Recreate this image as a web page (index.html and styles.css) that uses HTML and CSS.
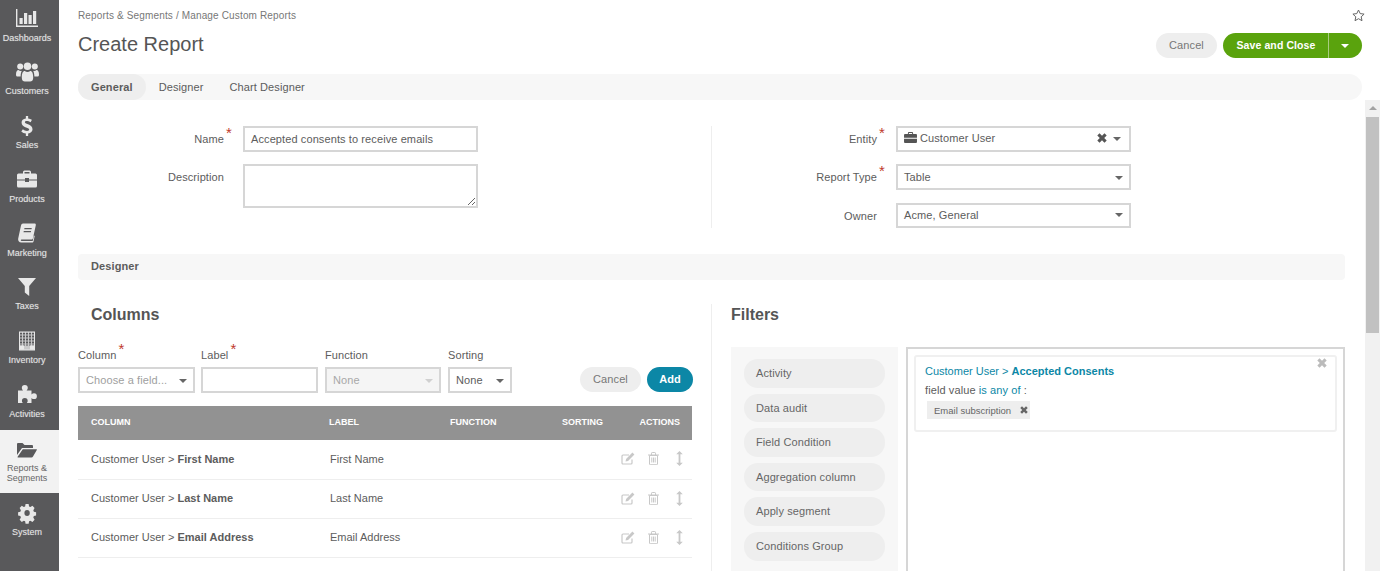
FILE: index.html
```html
<!DOCTYPE html>
<html>
<head>
	<title>Create Report</title>
	<link rel="stylesheet" href="styles.css">
</head>
<body>
	<svg class="icon-defs" width="0" height="0">
		<defs>
			<symbol id="i-edit" viewBox="0 0 14 13">
				<path d="M11 7.5V11a1 1 0 0 1-1 1H2a1 1 0 0 1-1-1V4a1 1 0 0 1 1-1h6" fill="none" stroke="currentColor" stroke-width="1.2"/>
				<path d="M4.5 9.5l.6-2.6L11.4.6l2 2-6.3 6.3z" fill="currentColor"/>
			</symbol>
			<symbol id="i-trash" viewBox="0 0 11 13">
				<path d="M1.5 3.5h8V12a.7.7 0 0 1-.7.7H2.2a.7.7 0 0 1-.7-.7zM0 3h11M3.5 3V1.2q0-.7.7-.7h2.6q.7 0 .7.7V3M3.800 5.500v5M5.500 5.500v5M7.200 5.500v5" fill="none" stroke="currentColor"/>
			</symbol>
			<symbol id="i-move" viewBox="0 0 7 15">
				<path d="M3.500 0L6.800 3.200H4.400v8.600h2.400L3.500 15 .2 11.800h2.400V3.200H.2z" fill="currentColor"/>
			</symbol>
			<symbol id="i-times" viewBox="0 0 10 10">
				<path d="M2.500.3L5 2.800 7.500.3 9.700 2.500 7.200 5l2.500 2.500-2.200 2.200L5 7.200 2.500 9.700.3 7.500 2.800 5 .3 2.500z" fill="currentColor"/>
			</symbol>
			<pattern id="windows" width="3" height="3" patternUnits="userSpaceOnUse">
				<rect x="1" y="1" width="2" height="2" fill="#59595b"/>
			</pattern>
		</defs>
	</svg>

	<nav class="sidebar">
		<a class="nav-item">
			<svg class="nav-icon" width="22" height="18" viewBox="0 0 22 18"><path d="M0 0h1.400v16.400H22V18H0zM3.500 9h3.200v6H3.500zM8 4h3.200v11H8zM12.500 6h3.200v9h-3.200zM17 2h3.200v13H17z"/></svg>
			<span>Dashboards</span>
		</a>
		<a class="nav-item">
			<svg class="nav-icon" width="23" height="19" viewBox="0 0 23 19"><circle cx="4.200" cy="4" r="3"/><circle cx="18.800" cy="4" r="3"/><circle cx="11.500" cy="3.800" r="3.800"/><path d="M0 12c0-3 1-4.500 2.500-4.500 1 1 2.500 1.200 3.500.7-.8 1-1.300 2.500-1.400 5.800H1.500C.5 14 0 13.500 0 12zM23 12c0-3-1-4.500-2.500-4.500-1 1-2.500 1.200-3.500.7.8 1 1.300 2.500 1.400 5.800h3.100c1 0 1.500-.5 1.500-2zM5.800 15c0-4.500 1.200-6.500 3-6.500 1.500 1.300 3.900 1.300 5.400 0 1.800 0 3 2 3 6.500 0 3-1.500 4-3 4H8.800c-1.500 0-3-1-3-4z"/></svg>
			<span>Customers</span>
		</a>
		<a class="nav-item">
			<svg class="nav-icon" width="12" height="21" viewBox="0 0 12 21"><path d="M4.800 0h2.400v2.500c1.500.2 3 .8 4 1.500L9.800 6.500C8.500 5.600 7 5.200 5.800 5.200c-1.300 0-2 .5-2 1.300 0 2.300 8 1.700 8 7.500 0 2.500-1.800 4-4.600 4.400V21H4.800v-2.500c-1.800-.2-3.500-1-4.800-2.200l1.700-2.400c1.300 1.200 2.800 1.800 4.300 1.800 1.500 0 2.300-.6 2.300-1.500C8.300 11.700.3 12.300.3 6.700.3 4.300 2 2.900 4.800 2.500z"/></svg>
			<span>Sales</span>
		</a>
		<a class="nav-item">
			<svg class="nav-icon" width="20" height="17" viewBox="0 0 20 17"><path d="M6 3V1.500Q6 0 7.500 0h5Q14 0 14 1.500V3h4.500Q20 3 20 4.500V9h-8V7.500H8V9H0V4.500Q0 3 1.500 3zM7.500 1.500V3h5V1.500zM0 10h8v1.500h4V10h8v5.500q0 1.500-1.500 1.500h-17Q0 17 0 15.500z"/></svg>
			<span>Products</span>
		</a>
		<a class="nav-item">
			<svg class="nav-icon" width="18" height="19" viewBox="0 0 18 19"><path d="M5 0h11.500c1 0 1.500.7 1.300 1.700L15 14.500c-.2 1-.8 1.500-1.800 1.500H3.500c-1 0-1 1.500.2 1.500h11l1.200-5.500.8.500L15.500 18c-.2.7-.5 1-1.200 1H3.500C1 19-.3 17.200.2 15L3 2C3.300.7 4 0 5 0zM6.500 4.500l-.3 1.200h7.300l.3-1.200zM5.800 7.500l-.3 1.200h7.300l.3-1.200z" fill-rule="evenodd"/></svg>
			<span>Marketing</span>
		</a>
		<a class="nav-item">
			<svg class="nav-icon" width="18" height="18" viewBox="0 0 18 18"><path d="M0 0h18l-6.800 8v10l-4.400-3.500V8z"/></svg>
			<span>Taxes</span>
		</a>
		<a class="nav-item">
			<svg class="nav-icon" width="16" height="19" viewBox="0 0 16 19"><path d="M0 0h16v19H0z"/><path d="M1 1h14v17H1z" fill="#c9c9ca"/><path d="M1 1h14v13H1z" fill="url(#windows)"/><path d="M1 14h4v4H1zM11 14h4v4h-4z"/></svg>
			<span>Inventory</span>
		</a>
		<a class="nav-item">
			<svg class="nav-icon" width="19" height="18" viewBox="0 0 19 18"><path d="M0 5.500h5c-.8-.8-1.200-1.500-1.200-2.500a3 3 0 0 1 6 0c0 1-.4 1.700-1.200 2.500h4.900v4c.8-.8 1.500-1.200 2.500-1.200a2.900 2.900 0 0 1 0 5.800c-1 0-1.700-.4-2.500-1.200V18H8.800c.6-.7.900-1.300.9-2.100a2.900 2.900 0 0 0-5.800 0c0 .8.300 1.400.9 2.100H0z"/></svg>
			<span>Activities</span>
		</a>
		<a class="nav-item nav-item-active">
			<svg class="nav-icon" width="20" height="15" viewBox="0 0 20 15"><path d="M0 1.500Q0 .5 1 .5h4.500L7.500 2.500H15q1 0 1 1V5.500H5L0 12.500z"/><path d="M5.800 6.800H19.500q.7 0 .3.700L16 14q-.5 1-1.500 1H1q-.8 0-.4-.7z"/></svg>
			<span>Reports &amp; Segments</span>
		</a>
		<a class="nav-item nav-item-last">
			<svg class="nav-icon" width="18" height="18" viewBox="0 0 18 18"><path fill-rule="evenodd" d="M7.300 0h3.400l.5 2.500 1.500.6L14.900 1.700l2.400 2.400-1.400 2.100.6 1.500 2.500.5v3.400l-2.500.5-.6 1.500 1.400 2.100-2.400 2.400-2.200-1.400-1.500.6-.5 2.500H7.300l-.5-2.500-1.500-.6-2.200 1.400L.7 15.700l1.400-2.100-.6-1.500L-1 11.600V8.200l2.500-.5.600-1.500L.7 4.100l2.400-2.400 2.200 1.400 1.500-.6zM9 6a3 3 0 1 0 0 6 3 3 0 0 0 0-6z" transform="translate(1 0) scale(.9 1)"/></svg>
			<span>System</span>
		</a>
	</nav>

	<div class="main">
		<header class="page-head">
			<div class="breadcrumbs-row">
				<div class="breadcrumbs">Reports &amp; Segments / Manage Custom Reports</div>
				<svg class="fav-star" width="13" height="13" viewBox="0 0 13 13"><path d="M6.500 1l1.700 3.600 3.900.5-2.900 2.700.8 3.900-3.500-2-3.500 2 .8-3.900L.9 5.100l3.900-.5z" fill="none" stroke="#666"/></svg>
			</div>
			<div class="title-row">
				<h1>Create Report</h1>
				<div class="page-actions">
					<button class="btn btn-light">Cancel</button>
					<div class="btn-save">
						<button class="btn-save-main">Save and Close</button>
						<span class="btn-save-caret"><i class="caret caret-white"></i></span>
					</div>
				</div>
			</div>
			<div class="tabs">
				<a class="tab tab-active">General</a>
				<a class="tab">Designer</a>
				<a class="tab">Chart Designer</a>
			</div>
		</header>

		<div class="body-wrap">
			<div class="content">
				<section class="general">
					<div class="general-col general-left">
						<div class="form-row">
							<label class="form-label"><span class="req">Name</span></label>
							<div class="field">Accepted consents to receive emails</div>
						</div>
						<div class="form-row">
							<label class="form-label">Description</label>
							<textarea class="field-area"></textarea>
						</div>
					</div>
					<div class="general-col general-right">
						<div class="form-row">
							<label class="form-label"><span class="req">Entity</span></label>
							<div class="field field-select field-entity">
								<svg class="entity-icon" width="13" height="11" viewBox="0 0 20 17"><path d="M6 3V1.500Q6 0 7.500 0h5Q14 0 14 1.500V3h4.500Q20 3 20 4.500V9H0V4.500Q0 3 1.500 3zM7.500 1.500V3h5V1.500zM0 10.500h20v5q0 1.500-1.500 1.500h-17Q0 17 0 15.500z"/></svg>
								<span class="field-text">Customer User</span>
								<svg class="entity-clear" width="10" height="10"><use href="#i-times"/></svg>
								<i class="caret"></i>
							</div>
						</div>
						<div class="form-row">
							<label class="form-label"><span class="req">Report Type</span></label>
							<div class="field field-select">
								<span class="field-text">Table</span>
								<i class="caret"></i>
							</div>
						</div>
						<div class="form-row form-row-owner">
							<label class="form-label">Owner</label>
							<div class="field field-select">
								<span class="field-text">Acme, General</span>
								<i class="caret"></i>
							</div>
						</div>
					</div>
				</section>

				<div class="section-bar">Designer</div>

				<section class="designer">
					<div class="columns-col">
						<h2>Columns</h2>
						<div class="column-form">
							<div class="cf-item cf-column">
								<label><span class="req">Column</span></label>
								<div class="field field-select cf-placeholder"><span class="field-text">Choose a field...</span><i class="caret"></i></div>
							</div>
							<div class="cf-item cf-label">
								<label><span class="req">Label</span></label>
								<div class="field"></div>
							</div>
							<div class="cf-item cf-function">
								<label>Function</label>
								<div class="field field-select field-disabled"><span class="field-text">None</span><i class="caret"></i></div>
							</div>
							<div class="cf-item cf-sorting">
								<label>Sorting</label>
								<div class="field field-select"><span class="field-text">None</span><i class="caret"></i></div>
							</div>
							<div class="cf-buttons">
								<button class="btn btn-light">Cancel</button>
								<button class="btn btn-add">Add</button>
							</div>
						</div>

						<table class="grid">
							<thead>
								<tr>
									<th class="col-column">Column</th>
									<th class="col-label">Label</th>
									<th class="col-function">Function</th>
									<th class="col-sorting">Sorting</th>
									<th class="col-actions">Actions</th>
								</tr>
							</thead>
							<tbody>
								<tr>
									<td>Customer User &gt; <b>First Name</b></td>
									<td>First Name</td>
									<td></td>
									<td></td>
									<td class="row-actions"><svg width="14" height="13"><use href="#i-edit"/></svg><svg width="11" height="13"><use href="#i-trash"/></svg><svg width="7" height="15"><use href="#i-move"/></svg></td>
								</tr>
								<tr>
									<td>Customer User &gt; <b>Last Name</b></td>
									<td>Last Name</td>
									<td></td>
									<td></td>
									<td class="row-actions"><svg width="14" height="13"><use href="#i-edit"/></svg><svg width="11" height="13"><use href="#i-trash"/></svg><svg width="7" height="15"><use href="#i-move"/></svg></td>
								</tr>
								<tr>
									<td>Customer User &gt; <b>Email Address</b></td>
									<td>Email Address</td>
									<td></td>
									<td></td>
									<td class="row-actions"><svg width="14" height="13"><use href="#i-edit"/></svg><svg width="11" height="13"><use href="#i-trash"/></svg><svg width="7" height="15"><use href="#i-move"/></svg></td>
								</tr>
							</tbody>
						</table>
					</div>

					<div class="filters-col">
						<h2>Filters</h2>
						<div class="filters">
							<div class="criteria">
								<div class="pill">Activity</div>
								<div class="pill">Data audit</div>
								<div class="pill">Field Condition</div>
								<div class="pill">Aggregation column</div>
								<div class="pill">Apply segment</div>
								<div class="pill">Conditions Group</div>
							</div>
							<div class="conditions">
								<div class="condition">
									<svg class="condition-close" width="10" height="10"><use href="#i-times"/></svg>
									<div class="condition-title">Customer User &gt; <b>Accepted Consents</b></div>
									<div class="condition-rule">field value <span class="teal">is any of</span> :</div>
									<span class="tag">Email subscription <svg width="8" height="8"><use href="#i-times"/></svg></span>
								</div>
							</div>
						</div>
					</div>
				</section>
			</div>

			<div class="scrollbar">
				<i class="scroll-up"></i>
				<div class="scroll-thumb"></div>
			</div>
		</div>
	</div>
</body>
</html>
```

FILE: styles.css
```css
* {
	box-sizing: border-box;
}

html, body {
	height: 100%;
}

body {
	margin: 0;
	display: flex;
	overflow: hidden;
	background-color: #ffffff;
	color: #5c5c5c;
	font-family: "Liberation Sans", Arial, sans-serif;
	font-size: 11px;
	letter-spacing: .1px;
}

button {
	font-family: inherit;
	letter-spacing: inherit;
	border: none;
	cursor: pointer;
}

.icon-defs {
	position: absolute;
}

/* sidebar */
.sidebar {
	flex: 0 0 59px;
	background-color: #59595b;
	display: flex;
	flex-direction: column;
}

.nav-item {
	height: 53.75px;
	padding: 8px 5px 0 0;
	display: flex;
	flex-direction: column;
	align-items: center;
	color: #e4e4e4;
	font-size: 9px;
	letter-spacing: 0;
	line-height: 12px;
	text-align: center;
	text-shadow: 0 0 1px rgba(255, 255, 255, .35);
}

.nav-icon {
	height: 20px;
	margin-bottom: 3.5px;
	fill: #e8e8e8;
	overflow: visible;
}

.nav-item-active {
	height: 63px;
	padding-top: 10px;
	background-color: #f2f2f2;
	color: #666666;
	line-height: 10px;
	text-shadow: none;
}

.nav-item-active .nav-icon {
	margin-bottom: 3px;
	fill: #59595b;
}

.nav-item-last {
	padding-top: 10px;
}

.nav-item-last .nav-icon {
	margin-bottom: 3px;
}

/* page head */
.main {
	flex: 1;
	min-width: 0;
	display: flex;
	flex-direction: column;
}

.page-head {
	padding: 0 18px 0 19px;
}

.breadcrumbs-row {
	height: 33px;
	padding-top: 9px;
	display: flex;
	justify-content: space-between;
}

.breadcrumbs {
	font-size: 10px;
	letter-spacing: .15px;
	line-height: 13px;
	color: #777777;
}

.fav-star {
	margin: 0 -3px 0 0;
}

.title-row {
	height: 25px;
	display: flex;
	justify-content: space-between;
	align-items: center;
}

h1 {
	margin: 0 0 2px;
	font-size: 20px;
	font-weight: normal;
	letter-spacing: 0;
	color: #555555;
}

.page-actions {
	display: flex;
	gap: 6px;
}

.btn {
	height: 25px;
	padding: 0 0 2px;
	border-radius: 13px;
	font-size: 11px;
}

.btn-light {
	width: 61px;
	background-color: #eeeeee;
	color: #777777;
}

.btn-add {
	width: 46px;
	background-color: #0c87a6;
	color: #ffffff;
	font-weight: bold;
}

.btn-save {
	display: flex;
	width: 139px;
	height: 25px;
	border-radius: 13px;
	overflow: hidden;
	background-color: #5aa30d;
}

.btn-save-main {
	width: 106px;
	padding: 0 0 2px 1px;
	background: none;
	border-right: 1px solid #a8cd80;
	color: #ffffff;
	font-size: 10.5px;
	font-weight: bold;
}

.btn-save-caret {
	flex: 1;
	padding-right: 2px;
	display: flex;
	align-items: center;
	justify-content: center;
}

.caret {
	display: inline-block;
	width: 0;
	height: 0;
	border-left: 4px solid transparent;
	border-right: 4px solid transparent;
	border-top: 4px solid #666666;
}

.caret-white {
	border-top-color: #ffffff;
}

.tabs {
	margin-top: 16px;
	height: 26px;
	display: flex;
	background-color: #f7f7f7;
	border-radius: 13px;
}

.tab {
	padding: 0 13px;
	line-height: 26px;
	border-radius: 13px;
}

.tab-active {
	background-color: #eeeeee;
	font-weight: bold;
}

/* scroll area */
.body-wrap {
	flex: 1;
	min-height: 0;
	display: flex;
}

.content {
	flex: 1;
	min-width: 0;
	padding: 26px 20px 0 19px;
	overflow: hidden;
}

.scrollbar {
	flex: 0 0 15px;
	background-color: #f1f1f1;
	padding: 17px 1px 0;
	position: relative;
}

.scroll-up {
	position: absolute;
	top: 6px;
	left: 4px;
	border-left: 4px solid transparent;
	border-right: 4px solid transparent;
	border-bottom: 4px solid #a3a3a3;
}

.scroll-thumb {
	height: 216px;
	background-color: #c1c1c1;
}

/* general */
.general {
	display: flex;
	height: 102px;
}

.general-col {
	flex: 1;
}

.general-left {
	flex: 0 0 634px;
	border-right: 1px solid #eeeeee;
}

.form-row {
	display: flex;
	margin-bottom: 12px;
}

.form-row-owner {
	margin-top: 13px;
}

.form-label {
	line-height: 26px;
	text-align: right;
	margin-right: 19px;
}

.general-left .form-label {
	flex: 0 0 146px;
}

.general-right .form-label {
	flex: 0 0 165px;
}

.req {
	position: relative;
}

.req::after {
	content: "*";
	position: absolute;
	left: 100%;
	top: -8px;
	margin-left: 2px;
	color: #c0392b;
	font-size: 15px;
	line-height: 15px;
}

.field {
	display: flex;
	align-items: center;
	width: 235px;
	height: 26px;
	padding: 0 6px;
	border: 2px solid #d6d6d6;
	background-color: #ffffff;
	font-size: 11px;
}

.form-row-owner .field {
	height: 25px;
	padding-bottom: 2px;
}

.field-area {
	width: 235px;
	height: 44px;
	border: 2px solid #d6d6d6;
	border-radius: 0;
	outline: none;
}

.field-select .field-text {
	flex: 1;
}

.field-select .caret {
	margin-top: 1px;
}

.field-entity {
	padding-bottom: 2px;
	padding-right: 8px;
}

.entity-icon {
	fill: #555555;
	margin-right: 3px;
	margin-top: -2px;
}

.entity-clear {
	margin-right: 6px;
	color: #555555;
}

/* designer */
.section-bar {
	margin-top: 26px;
	height: 26px;
	padding-left: 13px;
	line-height: 24px;
	background-color: #f7f7f7;
	border-radius: 4px;
	font-weight: bold;
}

.designer {
	display: flex;
	margin-top: 24px;
}

h2 {
	margin: 0;
	font-size: 16px;
	line-height: 22px;
	font-weight: bold;
	letter-spacing: 0;
	color: #555555;
}

.columns-col {
	flex: 0 0 634px;
	padding-right: 19px;
	border-right: 1px solid #eeeeee;
}

.columns-col h2 {
	padding-left: 13px;
}

.column-form {
	margin-top: 23px;
	display: flex;
	align-items: flex-end;
	gap: 7px;
}

.cf-item label {
	display: block;
	line-height: 12px;
	margin-bottom: 6px;
}

.cf-column {
	width: 117px;
	margin-right: -1px;
}

.cf-label {
	width: 117px;
}

.cf-function {
	width: 116px;
}

.cf-sorting {
	width: 64px;
}

.cf-item .field {
	width: 100%;
}

.cf-placeholder {
	color: #a0a0a0;
}

.field-disabled {
	background-color: #f5f5f5;
	color: #a8a8a8;
}

.field-disabled .caret {
	border-top-color: #d0d0d0;
}

.cf-buttons {
	margin-left: auto;
	margin-right: -1px;
	display: flex;
	gap: 6px;
	padding-bottom: 1px;
}

.grid {
	width: 100%;
	margin-top: 13px;
	border-collapse: separate;
	border-spacing: 0;
	table-layout: fixed;
	letter-spacing: 0;
}

.grid th {
	height: 34px;
	padding: 0 0 2px;
	background-color: #929292;
	color: #ffffff;
	font-size: 9px;
	text-align: left;
	text-transform: uppercase;
}

.grid td {
	height: 39px;
	padding: 0 0 2px;
	border-bottom: 1px solid #eeeeee;
}

.grid tbody tr:first-child td {
	height: 40px;
}

.grid th:first-child,
.grid td:first-child {
	padding-left: 13px;
}

.grid td:nth-child(2) {
	padding-left: 1px;
}

.col-column {
	width: 251px;
}

.col-label {
	width: 121px;
}

.col-function {
	width: 112px;
}

.col-sorting {
	width: 40px;
}

.grid .col-actions {
	text-align: right;
	padding-right: 12px;
}

.grid .row-actions {
	color: #c8c8c8;
	text-align: right;
	padding-right: 9px;
	white-space: nowrap;
}

.row-actions svg {
	margin-left: 13px;
	vertical-align: middle;
}

.row-actions svg:last-child {
	margin-left: 17px;
}

/* filters */
.filters-col {
	flex: 1;
	min-width: 0;
	padding-left: 19px;
}

.filters {
	margin-top: 21px;
	display: flex;
	gap: 8px;
}

.criteria {
	flex: 0 0 167px;
	padding: 12px 13px;
	background-color: #f7f7f7;
	display: flex;
	flex-direction: column;
	gap: 6px;
}

.pill {
	height: 28.6px;
	padding-left: 12px;
	line-height: 28px;
	background-color: #eeeeee;
	border-radius: 14px;
	color: #666666;
}

.conditions {
	flex: 1;
	height: 260px;
	padding: 6px;
	border: 2px solid #d6d6d6;
}

.condition {
	position: relative;
	height: 77px;
	padding: 7px 9px 0;
	border: 2px solid #f0f0f0;
	border-radius: 3px;
}

.condition-close {
	position: absolute;
	top: 1px;
	right: 8px;
	color: #bbbbbb;
}

.condition-title {
	color: #0c87a6;
	line-height: 14px;
	letter-spacing: 0;
}

.condition-rule {
	margin-top: 5px;
	line-height: 14px;
}

.teal {
	color: #0c87a6;
}

.tag {
	display: inline-flex;
	align-items: center;
	gap: 9px;
	height: 18px;
	margin: 4px 0 0 2px;
	padding: 0 2px 0 7px;
	background-color: #eeeeee;
	font-size: 9.5px;
	letter-spacing: 0;
	color: #666666;
}
```
